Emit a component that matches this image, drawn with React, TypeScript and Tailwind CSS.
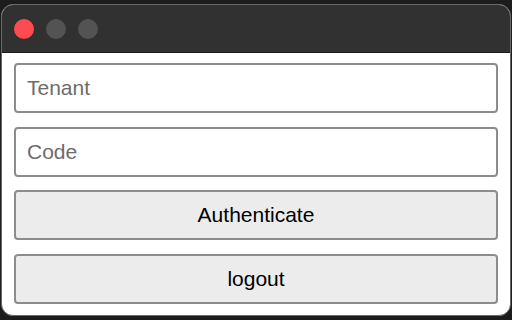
export default function App() {
  return (
    <div className="w-[512px] h-[320px] bg-[#1c1c1c] pt-[4px] px-[1px] overflow-hidden" style={{ fontFamily: '"Liberation Sans", Arial, sans-serif' }}>
      <div className="h-[312px] rounded-[12px] border border-[#6a6a6a] bg-white overflow-hidden flex flex-col">
        {/* title bar */}
        <div className="h-[48px] shrink-0 bg-[#313131] border-b border-[#1a1a1a] flex items-center gap-[12px] pl-[12px]">
          <span className="w-[20px] h-[20px] rounded-full bg-[#fe4b50]" />
          <span className="w-[20px] h-[20px] rounded-full bg-[#535353]" />
          <span className="w-[20px] h-[20px] rounded-full bg-[#535353]" />
        </div>

        <div className="flex flex-col gap-[13.5px] px-[12px] pt-[10px]">
          <input
            placeholder="Tenant"
            className="h-[50px] w-full rounded-[4px] border-2 border-[#8c8c8c] bg-white px-[11px] text-[21px] text-black placeholder:text-[#6c6c6c] outline-none"
          />
          <input
            placeholder="Code"
            className="h-[50px] w-full rounded-[4px] border-2 border-[#8c8c8c] bg-white px-[11px] text-[21px] text-black placeholder:text-[#6c6c6c] outline-none"
          />
          <button className="h-[50px] w-full rounded-[4px] border-2 border-[#8c8c8c] bg-[#ececec] text-[21px] text-black">
            Authenticate
          </button>
          <button className="h-[50px] w-full rounded-[4px] border-2 border-[#8c8c8c] bg-[#ececec] text-[21px] text-black">
            logout
          </button>
        </div>
      </div>
    </div>
  );
}
